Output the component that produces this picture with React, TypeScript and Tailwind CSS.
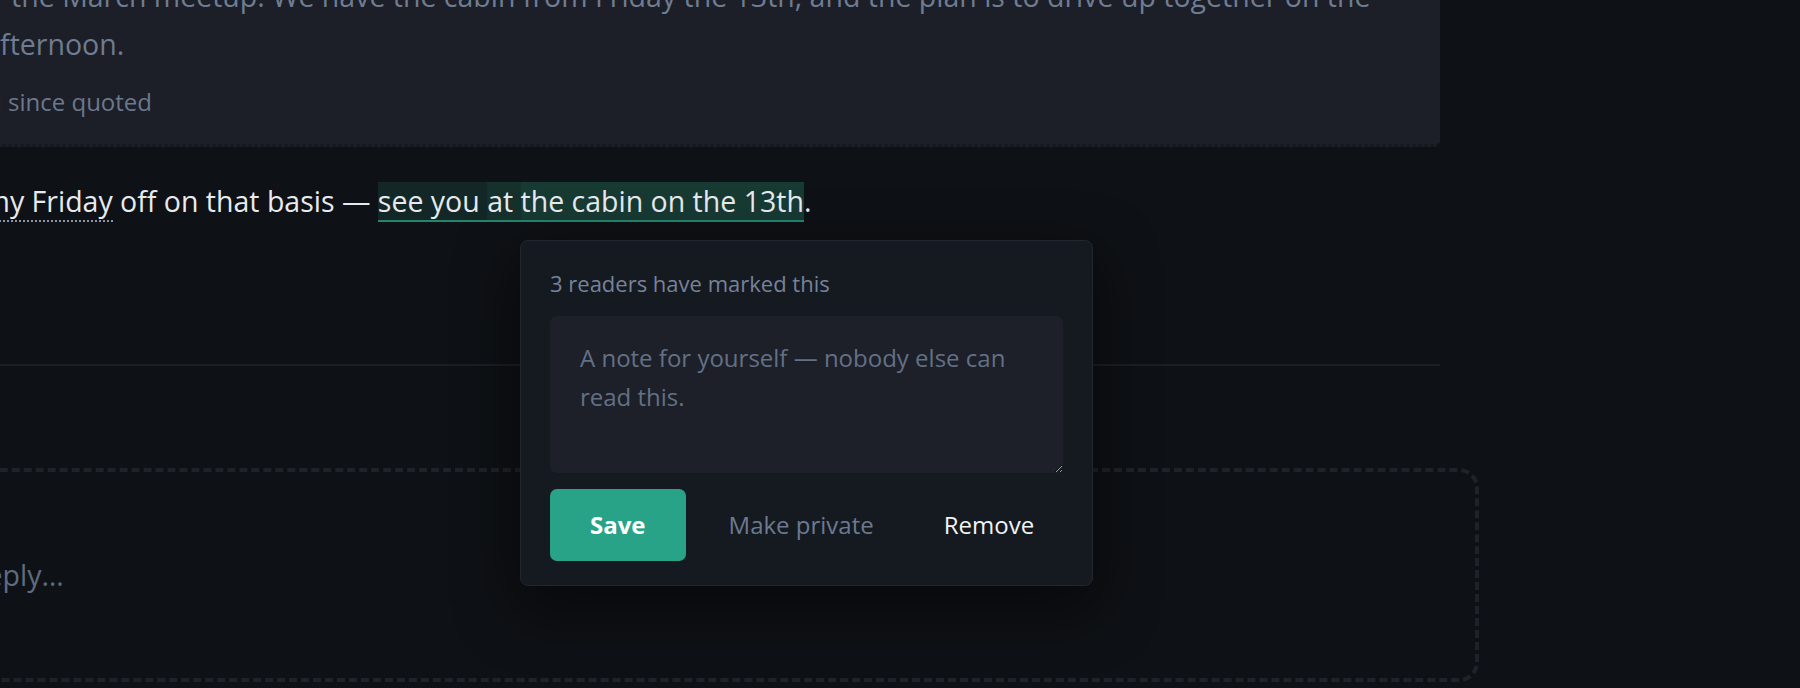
import { PencilLine } from "lucide-react";

export default function App() {
  return (
    <div className="relative h-[688px] w-full overflow-hidden bg-[#0e1115] font-['Open_Sans',sans-serif]">
      {/* thread column, scrolled a little past its left edge */}
      <div className="ml-[-125px] w-[1565px]">
        <div className="mt-[-52px] rounded-[6px] border-b-[3px] border-dotted border-[#15181e] bg-[#1c1f27] px-[30px] pb-6 pt-6">
          <p className="text-[28.5px] leading-[48px] text-[#6f7c92]">
            Yes, for the March meetup. We have the cabin from Friday the 13th, and the plan is to drive up together on the
            same afternoon.
          </p>
          <p className="mt-4 flex items-center gap-2 text-[24px] leading-[36px] text-[#6b788e]">
            <PencilLine size={18} />
            Edited since quoted
          </p>
        </div>

        <p className="mt-[30px] whitespace-nowrap text-[28.5px] leading-[48px] text-[#e7eaee]">
          Booked <span className="border-b-2 border-dotted border-[#8a94a3]">my Friday</span> off on that basis —{" "}
          <span className="border-b-2 border-[#22866c]">
            <span className="bg-[#132826]">see you </span>
            <span className="bg-[#16302c]">at </span>
            <span className="bg-[#173a33]">the cabin on the 13th</span>
          </span>
          .
        </p>

        <div className="mt-[139px] h-[2px] bg-[#1b1f26]" />

        <div className="mx-[-39px] mt-[102px] flex h-[214px] items-center rounded-[20px] border-4 border-dashed border-[#1e222a] px-[33px]">
          <span className="text-[28.5px] leading-[48px] text-[#5f6b7f]">Write a reply…</span>
        </div>
      </div>

      {/* highlight popover */}
      <div className="absolute left-[520px] top-[240px] w-[573px] rounded-lg border border-[#22262e] bg-[#151920] px-[29px] pb-[24px] pt-[26px] shadow-[0_20px_60px_rgba(0,0,0,0.55)]">
        <p className="text-[22px] leading-[33px] text-[#76839a]">3 readers have marked this</p>
        <textarea
          className="mt-4 block h-[157px] w-full rounded-[7px] bg-[#1d2028] px-[30px] py-[22px] text-[24px] leading-[39px] text-[#e7eaee] outline-none [color-scheme:dark] placeholder:text-[#637086]"
          placeholder="A note for yourself — nobody else can read this."
        />
        <div className="mt-4 flex gap-4">
          <button className="h-[72px] rounded-[7px] bg-[#29a388] px-10 text-[24px] font-bold text-white">Save</button>
          <button className="h-[72px] px-[27px] text-[24px] text-[#6c7990]">Make private</button>
          <button className="h-[72px] px-[27px] text-[24px] text-[#f1f3f6]">Remove</button>
        </div>
      </div>
    </div>
  );
}
